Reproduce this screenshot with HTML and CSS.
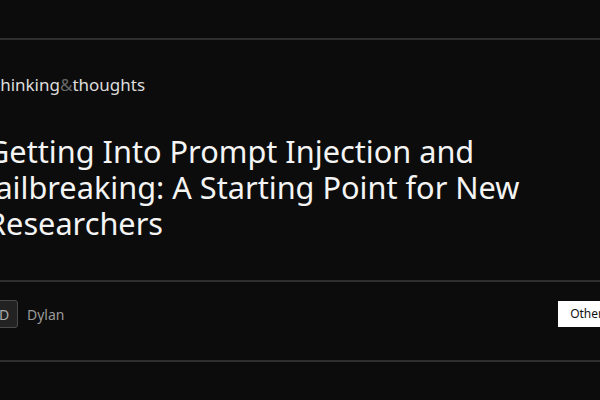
FILE: index.html
```html
<!DOCTYPE html>
<html>

<head>
    <meta charset="UTF-8" />
    <meta name="viewport" content="width=device-width, initial-scale=1.0">
    <title>Getting Into Prompt Injection and Jailbreaking</title>
    <link rel="stylesheet" href="styles.css">
</head>

<body>
    <div class="topbar"></div>

    <div class="page">
        <div class="brand">thinking<span class="amp">&amp;</span>thoughts</div>

        <h1 class="title">Getting Into Prompt Injection and Jailbreaking: A Starting Point for New Researchers</h1>
    </div>

    <div class="meta">
        <div class="page meta-row">
            <div class="author">
                <span class="avatar">D</span>
                <span class="name">Dylan</span>
            </div>
            <span class="tag">Other</span>
        </div>
    </div>
</body>

</html>
```

FILE: styles.css
```css
body {
    margin: 0;
    background-color: #0c0c0c;
    color: #eee;
    font-family: "Noto Sans", "Open Sans", sans-serif;
    overflow: hidden;
}

.topbar {
    height: 38px;
    border-bottom: 2px solid #2e2e2e;
}

.page {
    margin-left: -8px;
    width: 623px;
}

.brand {
    margin-left: 2px;
    padding-top: 33px;
    font-size: 17px;
    line-height: 24px;
    color: #ddd;
}

.amp {
    color: #666;
}

.title {
    max-width: 560px;
    margin: 36px 0 0 -5px;
    padding-bottom: 39px;
    font-size: 30.7px;
    font-weight: 400;
    line-height: 36px;
    color: #f4f4f4;
}

.meta {
    border-top: 2px solid #2e2e2e;
    border-bottom: 2px solid #2e2e2e;
}

.meta-row {
    box-sizing: border-box;
    display: flex;
    align-items: flex-start;
    justify-content: space-between;
    height: 78px;
    padding-top: 18px;
}

.author {
    display: flex;
    align-items: center;
    gap: 9px;
    margin-left: -2px;
}

.avatar {
    display: flex;
    align-items: center;
    justify-content: center;
    width: 26px;
    height: 26px;
    border: 1px solid #4a4a4a;
    border-radius: 3px;
    background-color: #222;
    color: #aaa;
    font-size: 14px;
}

.name {
    font-size: 14px;
    color: #9a9a9a;
}

.tag {
    margin-top: 1px;
    padding: 4px 12px;
    background-color: #fff;
    color: #111;
    font-size: 12px;
    line-height: 18px;
}
```
